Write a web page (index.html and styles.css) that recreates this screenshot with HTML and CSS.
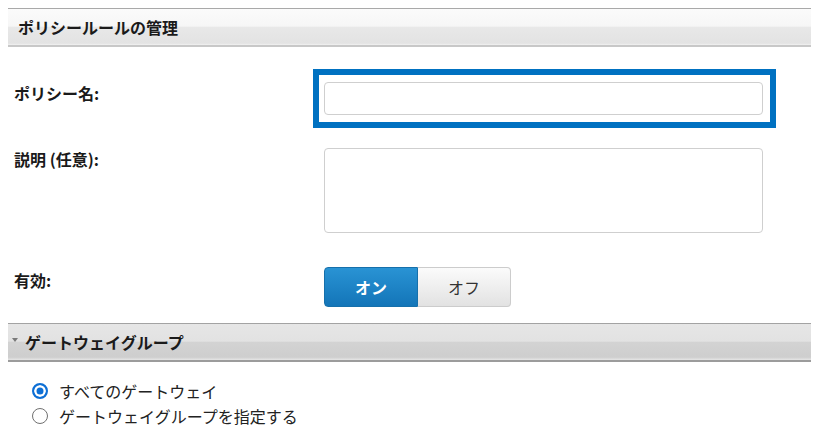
FILE: index.html
```html
<!DOCTYPE html>
<html lang="ja">
<head>
<meta charset="utf-8">
<title>ポリシールールの管理</title>
<link rel="stylesheet" href="styles.css">
</head>
<body>
<section class="panel">
  <div class="panel-head">ポリシールールの管理</div>
  <div class="form">
    <div class="row row-name">
      <label class="lbl" for="pname">ポリシー名:</label>
      <div class="ctl"><div class="ring"><input id="pname" class="text" type="text"></div></div>
    </div>
    <div class="row row-desc">
      <label class="lbl" for="pdesc">説明 (任意):</label>
      <div class="ctl"><textarea id="pdesc" class="area"></textarea></div>
    </div>
    <div class="row row-enable">
      <span class="lbl lbl-toggle">有効:</span>
      <div class="ctl">
        <div class="toggle">
          <button class="tg tg-on" type="button">オン</button>
          <button class="tg tg-off" type="button">オフ</button>
        </div>
      </div>
    </div>
  </div>
</section>
<section class="panel group">
  <div class="panel-head head-dark"><span class="caret"></span>ゲートウェイグループ</div>
  <div class="radios">
    <label class="radio"><span class="dot checked"></span>すべてのゲートウェイ</label>
    <label class="radio"><span class="dot"></span>ゲートウェイグループを指定する</label>
  </div>
</section>
</body>
</html>
```
FILE: styles.css
```css
html, body {
  margin: 0;
  padding: 0;
  background: #ffffff;
}
body {
  margin: 8px;
  font-family: "Noto Sans CJK JP", "Noto Sans", "Liberation Sans", sans-serif;
  color: #222222;
  font-size: 16px;
}
.panel-head {
  height: 36px;
  line-height: 36px;
  padding-left: 10px;
  font-size: 16px;
  font-weight: bold;
  color: #1a1a1a;
  border-top: 1px solid #a9a9a9;
  border-bottom: 2px solid #c8c8c8;
  background: linear-gradient(#fbfbfb 0%, #f6f6f6 48%, #e8e8e8 50%, #e3e3e3 95%, #f2f2f2 100%);
}
.form {
  padding-top: 35px;
}
.row {
  display: flex;
  align-items: flex-start;
}
.lbl {
  width: 310px;
  padding-left: 6px;
  padding-top: 1px;
  font-size: 16px;
  font-weight: bold;
  line-height: 20px;
  color: #1a1a1a;
}
.lbl-toggle {
  padding-top: 3px;
}
.row-desc {
  margin-top: 33px;
}
.row-enable {
  margin-top: 34px;
}
.ring {
  display: block;
  margin: -13px -13px -13px -11px;
  padding: 7px 7px 7px 5px;
  border: 6px solid #0071c1;
  width: 439px;
}
.text {
  display: block;
  box-sizing: border-box;
  width: 439px;
  height: 33px;
  margin: 0;
  border: 1px solid #cfcfcf;
  border-radius: 4px;
  background: #fff;
  font: inherit;
  padding: 0 8px;
  outline: none;
}
.area {
  display: block;
  box-sizing: border-box;
  width: 439px;
  height: 85px;
  margin: 0;
  border: 1px solid #cfcfcf;
  border-radius: 4px;
  background: #fff;
  resize: none;
  font: inherit;
}
.toggle {
  display: flex;
  width: 187px;
  height: 40px;
}
.tg {
  flex: 1;
  margin: 0;
  font-family: inherit;
  font-size: 16px;
  cursor: pointer;
  padding: 0;
}
.tg-on {
  color: #ffffff;
  font-weight: bold;
  border: 1px solid #1670ab;
  border-radius: 4px 0 0 4px;
  background: linear-gradient(#2993d4, #1375b8);
}
.tg-off {
  color: #333333;
  font-weight: normal;
  border: 1px solid #cccccc;
  border-left: none;
  border-radius: 0 4px 4px 0;
  background: linear-gradient(#fbfbfb, #e2e2e2);
}
.group {
  margin-top: 16px;
}
.head-dark {
  border-top: 1px solid #a3a3a3;
  border-bottom: 2px solid #9c9c9c;
  height: 36px;
  line-height: 36px;
  padding-left: 4px;
  background: linear-gradient(#e6e6e6 0%, #e2e2e2 48%, #d3d3d3 50%, #cecece 92%, #e6e6e6 100%);
  display: flex;
  align-items: center;
}
.caret {
  display: inline-block;
  width: 0;
  height: 0;
  border-left: 3.5px solid transparent;
  border-right: 3.5px solid transparent;
  border-top: 4px solid #7a7a7a;
  margin: 0 7px 5px 0;
}
.radios {
  padding-top: 16px;
}
.radio {
  display: flex;
  align-items: center;
  height: 25px;
  padding-left: 24px;
  font-size: 16px;
  color: #222;
}
.dot {
  box-sizing: border-box;
  width: 16px;
  height: 16px;
  border-radius: 50%;
  border: 1.5px solid #707070;
  background: #fff;
  margin-right: 11px;
  flex: none;
}
.dot.checked {
  border: 2px solid #0d6fd5;
  background: #0d6fd5;
  box-shadow: inset 0 0 0 2.5px #ffffff;
}
```
